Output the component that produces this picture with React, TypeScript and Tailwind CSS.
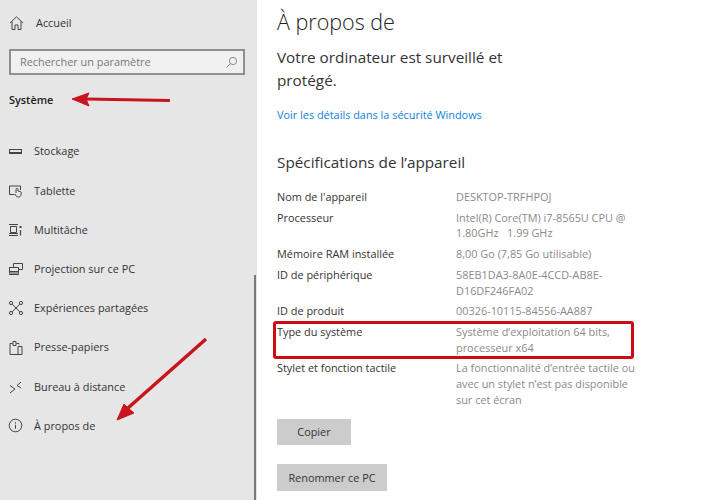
const stroke = { fill: "none", stroke: "#444444", strokeWidth: 1 };

function Ic({ children }: { children: React.ReactNode }) {
  return (
    <svg width="16" height="16" viewBox="0 0 16 16" className="shrink-0" {...stroke}>
      {children}
    </svg>
  );
}

const items: { label: string; icon: React.ReactNode }[] = [
  {
    label: "Stockage",
    icon: (
      <Ic>
        <rect x="1.5" y="5.5" width="12" height="4" />
        <path d="M2 8.5h11" />
      </Ic>
    ),
  },
  {
    label: "Tablette",
    icon: (
      <Ic>
        <path d="M6.5 11.5H1.5v-8.500h11v4" />
        <path d="M8 10V6.500a1 1 0 0 1 2 0V8l2.500.7a1 1 0 0 1 .8 1.100c0 2-.5 4.200-2.800 4.200-2 0-2.500-1-3.500-3" />
      </Ic>
    ),
  },
  {
    label: "Multitâche",
    icon: (
      <Ic>
        <path d="M1 2.500h9M1 13.500h9M1 11.500h9M2.500 4.500h6v6h-6z" />
        <path d="M12.500 4v2" strokeWidth="2" />
        <path d="M12.500 8v5.500" strokeWidth="1.200" />
      </Ic>
    ),
  },
  {
    label: "Projection sur ce PC",
    icon: (
      <Ic>
        <path d="M5.500 6V2.500h9v6H11" />
        <rect x="1.500" y="6.500" width="9" height="5.500" />
        <path d="M1.500 10.500h9M1 13.500h10" />
      </Ic>
    ),
  },
  {
    label: "Expériences partagées",
    icon: (
      <Ic>
        <circle cx="3" cy="3" r="1.600" />
        <circle cx="13" cy="3" r="1.600" />
        <circle cx="3" cy="13" r="1.600" />
        <circle cx="13" cy="13" r="1.600" />
        <path d="M4.200 4.200c2 2 5.600 5.600 7.600 7.600M11.800 4.200c-2 2-5.600 5.600-7.600 7.600" />
      </Ic>
    ),
  },
  {
    label: "Presse-papiers",
    icon: (
      <Ic>
        <path d="M4.500 3.500H2v11h8v-8h4v8h-4M11 4.500V3.500H8.500" />
        <path d="M5 3.500V1.500h3v4H5z" />
      </Ic>
    ),
  },
  {
    label: "Bureau à distance",
    icon: (
      <Ic>
        <path d="M2 6.500 7 10 2 14" />
        <path d="M13 3 9 6.500l4 2.500" />
      </Ic>
    ),
  },
  {
    label: "À propos de",
    icon: (
      <Ic>
        <circle cx="7.500" cy="7.500" r="6.300" />
        <path d="M7.500 6.800v4" />
        <path d="M7.500 4.200v1.400" />
      </Ic>
    ),
  },
];

const specs: [string, string[]][] = [
  ["Nom de l'appareil", ["DESKTOP-TRFHPOJ"]],
  ["Processeur", ["Intel(R) Core(TM) i7-8565U CPU @", "1.80GHz   1.99 GHz"]],
  ["Mémoire RAM installée", ["8,00 Go (7,85 Go utilisable)"]],
  ["ID de périphérique", ["58EB1DA3-8A0E-4CCD-AB8E-", "D16DF246FA02"]],
  ["ID de produit", ["00326-10115-84556-AA887"]],
  ["Type du système", ["Système d’exploitation 64 bits,", "processeur x64"]],
  [
    "Stylet et fonction tactile",
    ["La fonctionnalité d’entrée tactile ou", "avec un stylet n’est pas disponible", "sur cet écran"],
  ],
];

export default function App() {
  return (
    <div
      className="relative flex h-[500px] w-[705px] overflow-hidden bg-white text-[#1f1f1f]"
      style={{ fontFamily: '"Open Sans", "Noto Sans", sans-serif' }}
    >
      <aside className="relative w-[257px] shrink-0 bg-[#e6e6e6] pt-[15px]">
        <div className="flex h-4 items-center gap-[12px] pl-[9px] text-[10.9px] text-[#333]">
          <svg width="15" height="16" viewBox="0 0 15 16" className="shrink-0" {...stroke}>
            <path d="M1 8 7.500 1.800 14 8M3 6.500v8h3v-4.500h3v4.500h3v-8" />
          </svg>
          Accueil
        </div>
        <div className="mx-[9px] mt-[18px] flex h-[26px] w-[236px] items-center justify-between border-2 border-[#8f8f8f] bg-[#f0f0f0] pl-[9px] pr-[5px] text-[10.9px] text-[#777]">
          Rechercher un paramètre
          <svg width="13" height="13" viewBox="0 0 13 13" fill="none" stroke="#8a8a8a" strokeWidth="1">
            <circle cx="8" cy="5" r="3.600" />
            <path d="M5.400 7.600 1.500 11.500" />
          </svg>
        </div>
        <div className="mt-[17px] pl-[9px] text-[10.9px] leading-4 font-semibold text-[#222]">Système</div>
        <div className="mt-[24px] flex flex-col">
          {items.map((it) => (
            <div key={it.label} className="flex h-[39.2px] items-center gap-[10px] pl-[8px] text-[10.9px] text-[#333]">
              {it.icon}
              {it.label}
            </div>
          ))}
        </div>
        <div className="absolute top-[275px] right-[1px] bottom-0 w-[2px] bg-[#7a7a7a]" />
      </aside>

      <main className="flex-1 pl-[20px]">
        <h1 className="mt-[6px] text-[21.500px] leading-[32px] font-light text-[#222]">À propos de</h1>
        <p className="mt-[8px] w-[240px] text-[15.300px] leading-[23px] text-[#333]">
          Votre ordinateur est surveillé et protégé.
        </p>
        <a className="mt-[15px] block text-[10.900px] leading-4 text-[#0f7fdc]">Voir les détails dans la sécurité Windows</a>
        <h2 className="mt-[27px] text-[15.300px] leading-[24px] font-normal text-[#333]">Spécifications de l’appareil</h2>
        <dl className="mt-[15px] flex flex-col gap-[5px] text-[10.900px] leading-[15.700px]">
          {specs.map(([k, v]) => (
            <div key={k} className="flex">
              <dt className="w-[179px] shrink-0 text-[#333]">{k}</dt>
              <dd className="whitespace-pre text-[#8a8a8a]">
                {v.map((l) => (
                  <div key={l}>{l}</div>
                ))}
              </dd>
            </div>
          ))}
        </dl>
        <button className="mt-[12px] block h-[26px] w-[74px] bg-[#cccccc] text-[10.900px] text-[#333]">Copier</button>
        <button className="mt-[19px] block h-[27px] w-[110px] bg-[#cccccc] text-[10.900px] text-[#333]">Renommer ce PC</button>
      </main>

      <div className="absolute top-[321px] left-[273px] h-[38px] w-[361px] rounded-[3px] border-[3px] border-[#cc0b14]" />

      <svg className="pointer-events-none absolute inset-0" width="705" height="500" viewBox="0 0 705 500">
        <path d="M170 100.500 86 99" stroke="#c8141c" strokeWidth="3" fill="none" />
        <path d="M72 99 89 93 86 99 89 106z" fill="#c8141c" stroke="#c8141c" />
        <path d="M206 339 128 408" stroke="#c8141c" strokeWidth="3.500" fill="none" />
        <path d="M117 420 124 404 128 408 134 413z" fill="#c8141c" stroke="#c8141c" />
      </svg>
    </div>
  );
}
